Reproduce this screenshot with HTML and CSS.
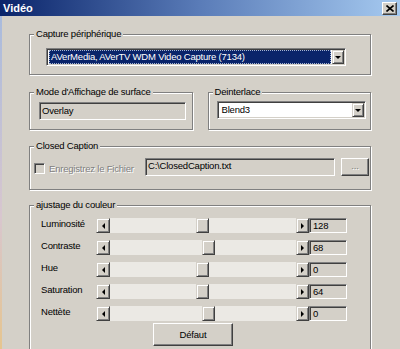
FILE: index.html
```html
<!doctype html>
<html>
	<head>
		<meta charset="utf-8"/>
		<title>Vidéo</title>
		<link rel="stylesheet" href="styles.css">
	</head>
	<body>
		<div class="window">
			<!-- barre de titre -->
			<div class="titlebar">
				<span class="title">Vidéo</span>
				<span class="close">
					<svg width="8" height="7" viewBox="0 0 8 7"><path d="M0.5 0.5 L7.5 6.5 M7.5 0.5 L0.5 6.5" stroke="#000" stroke-width="1.6"/></svg>
				</span>
			</div>
			<div class="content">
				<!-- capture -->
				<fieldset class="group">
					<legend>Capture périphérique</legend>
					<div class="group-body g-capture">
						<div class="combo wide">
							<div class="combo-text selected">AVerMedia, AVerTV WDM Video Capture (7134)</div>
							<div class="combo-btn"><i class="arrow-down"></i></div>
						</div>
					</div>
				</fieldset>

				<div class="pair">
					<fieldset class="group">
						<legend>Mode d'Affichage de surface</legend>
						<div class="group-body g-mode">
							<div class="field overlay">Overlay</div>
						</div>
					</fieldset>
					<fieldset class="group">
						<legend>Deinterlace</legend>
						<div class="group-body g-deint">
							<div class="combo deint">
								<div class="combo-text">Blend3</div>
								<div class="combo-btn"><i class="arrow-down"></i></div>
							</div>
						</div>
					</fieldset>
				</div>

				<fieldset class="group g-caption-box">
					<legend>Closed Caption</legend>
					<div class="group-body g-caption">
						<span class="check"></span>
						<span class="disabled check-label">Enregistrez le Fichier</span>
						<div class="field path">C:\ClosedCaption.txt</div>
						<div class="btn browse disabled">...</div>
					</div>
				</fieldset>

				<fieldset class="group g-color-box">
					<legend>ajustage du couleur</legend>
					<div class="group-body g-color">
						<div class="slider-row">
							<span class="slider-label">Luminosité</span>
							<div class="scroll">
								<div class="sb-btn"><i class="arrow-left"></i></div>
								<div class="track"><div class="thumb" style="margin-left:86px"></div></div>
								<div class="sb-btn"><i class="arrow-right"></i></div>
							</div>
							<div class="value">128</div>
						</div>
						<div class="slider-row">
							<span class="slider-label">Contraste</span>
							<div class="scroll">
								<div class="sb-btn"><i class="arrow-left"></i></div>
								<div class="track"><div class="thumb" style="margin-left:92px"></div></div>
								<div class="sb-btn"><i class="arrow-right"></i></div>
							</div>
							<div class="value">68</div>
						</div>
						<div class="slider-row">
							<span class="slider-label">Hue</span>
							<div class="scroll">
								<div class="sb-btn"><i class="arrow-left"></i></div>
								<div class="track"><div class="thumb" style="margin-left:86px"></div></div>
								<div class="sb-btn"><i class="arrow-right"></i></div>
							</div>
							<div class="value">0</div>
						</div>
						<div class="slider-row">
							<span class="slider-label">Saturation</span>
							<div class="scroll">
								<div class="sb-btn"><i class="arrow-left"></i></div>
								<div class="track"><div class="thumb" style="margin-left:86px"></div></div>
								<div class="sb-btn"><i class="arrow-right"></i></div>
							</div>
							<div class="value">64</div>
						</div>
						<div class="slider-row">
							<span class="slider-label">Nettète</span>
							<div class="scroll">
								<div class="sb-btn"><i class="arrow-left"></i></div>
								<div class="track"><div class="thumb" style="margin-left:92px"></div></div>
								<div class="sb-btn"><i class="arrow-right"></i></div>
							</div>
							<div class="value">0</div>
						</div>
						<div class="btn-row">
							<div class="btn defaut">Défaut</div>
						</div>
					</div>
				</fieldset>
			</div>
		</div>
	</body>
</html>
```

FILE: styles.css
```css
html, body{
	margin:0;
	padding:0;
	background:#d4d0c8;
}
body{
	font-family:"Liberation Sans", Arial, sans-serif;
	font-size:9.5px;
	letter-spacing:-0.2px;
	color:#000;
}
.window{
	width:400px;
	height:349px;
	overflow:hidden;
	display:flex;
	flex-direction:column;
	background:#d4d0c8;
}
/* barre de titre */
.titlebar{
	height:16px;
	flex:none;
	display:flex;
	align-items:center;
	justify-content:space-between;
	padding:0 3px 0 3px;
	background:linear-gradient(to right, #0a246a, #5a7cb8 50%, #a6caf0);
}
.title{
	color:#fff;
	font-weight:bold;
	font-size:11px;
	letter-spacing:0;
}
.close{
	width:13px;
	height:11px;
	display:flex;
	align-items:center;
	justify-content:center;
	background:#d4d0c8;
	border:1px solid;
	border-color:#fff #404040 #404040 #fff;
	box-shadow:inset -1px -1px 0 #808080;
}
.content{
	flex:1;
	padding:12px 29px 0 29px;
	background:linear-gradient(to bottom, #a9bbdd, #d8c6cf 60%, #e6c58e) left top / 2px 100% no-repeat, #d4d0c8;
}
/* cadres */
.group{
	margin:0;
	padding:0;
	min-width:0;
	border:1px solid #808080;
	box-shadow:1px 1px 0 #fff, inset 1px 1px 0 #fff;
}
.group legend{
	margin-left:4px;
	padding:0 2px;
	line-height:12px;
	background:#d4d0c8;
}
.g-capture{
	padding:8px 0 8px 16px;
}
.pair{
	display:flex;
	gap:15px;
	margin-top:11px;
}
.pair .group{
	flex:1;
}
.g-mode{
	padding:4px 0 9px 9px;
}
.g-deint{
	padding:3px 0 10px 8px;
}
.g-caption-box{
	margin-top:10px;
}
.g-caption{
	display:flex;
	align-items:center;
	height:18px;
	padding:6px 0 13px 4px;
}
.g-color-box{
	margin-top:9px;
}
.g-color{
	padding:7px 0 3px 11px;
}
/* champs */
.field{
	height:14px;
	line-height:14px;
	padding:0 2px;
	background:#d4d0c8;
	border:1px solid;
	border-color:#808080 #fff #fff #808080;
	box-shadow:inset 1px 1px 0 #404040, inset -1px -1px 0 #d4d0c8;
}
.overlay{
	width:141px;
	height:16px;
	line-height:16px;
}
.combo{
	display:flex;
	height:14px;
	padding:1px;
	background:#fff;
	border:1px solid;
	border-color:#808080 #fff #fff #808080;
	box-shadow:inset 1px 1px 0 #404040, inset -1px -1px 0 #d4d0c8;
}
.combo.wide{
	width:296px;
}
.combo.deint{
	width:145px;
}
.combo-text{
	flex:1;
	line-height:14px;
	padding:0 2px;
	margin-left:1px;
}
.combo-text.selected{
	background:#0a246a;
	color:#fff;
	outline:1px dotted #a6b4d0;
	outline-offset:-1px;
}
.combo-btn{
	width:12px;
	margin-left:1px;
	display:flex;
	align-items:center;
	justify-content:center;
	background:#d4d0c8;
	border:1px solid;
	border-color:#d4d0c8 #404040 #404040 #d4d0c8;
	box-shadow:inset 1px 1px 0 #fff, inset -1px -1px 0 #808080;
	box-sizing:border-box;
	height:14px;
}
.arrow-down{
	width:0;
	height:0;
	border-left:3px solid transparent;
	border-right:3px solid transparent;
	border-top:3px solid #000;
	margin-top:1px;
}
/* closed caption */
.check{
	width:9px;
	height:9px;
	margin-top:2px;
	background:#d4d0c8;
	border:1px solid;
	border-color:#808080 #fff #fff #808080;
	box-shadow:inset 1px 1px 0 #404040;
}
.disabled{
	color:#808080;
	text-shadow:1px 1px 0 #fff;
}
.check-label{
	margin-left:4px;
	width:90px;
	margin-top:2px;
}
.path{
	width:184px;
	height:16px;
	line-height:14px;
	margin-left:6px;
}
.btn{
	background:#d4d0c8;
	border:1px solid;
	border-color:#fff #404040 #404040 #fff;
	box-shadow:inset -1px -1px 0 #808080;
	text-align:center;
	box-sizing:border-box;
}
.browse{
	width:28px;
	height:18px;
	line-height:14px;
	margin-left:6px;
}
/* curseurs */
.slider-row{
	display:flex;
	height:15px;
	margin-bottom:7px;
}
.slider-label{
	width:55px;
	line-height:11px;
}
.scroll{
	display:flex;
	width:213px;
}
.sb-btn{
	width:14px;
	height:15px;
	box-sizing:border-box;
	display:flex;
	align-items:center;
	justify-content:center;
	background:#d4d0c8;
	border:1px solid;
	border-color:#d4d0c8 #404040 #404040 #d4d0c8;
	box-shadow:inset 1px 1px 0 #fff, inset -1px -1px 0 #808080;
}
.sb-btn:last-child{
	width:13px;
}
.arrow-left{
	border-top:3px solid transparent;
	border-bottom:3px solid transparent;
	border-right:3px solid #000;
}
.arrow-right{
	border-top:3px solid transparent;
	border-bottom:3px solid transparent;
	border-left:3px solid #000;
}
.track{
	flex:1;
	display:flex;
	background:#ebe9e4;
}
.thumb{
	width:13px;
	height:15px;
	box-sizing:border-box;
	background:#d4d0c8;
	border:1px solid;
	border-color:#d4d0c8 #404040 #404040 #d4d0c8;
	box-shadow:inset 1px 1px 0 #fff, inset -1px -1px 0 #808080;
}
.value{
	width:38px;
	height:15px;
	box-sizing:border-box;
	line-height:13px;
	padding-left:3px;
	background:#d4d0c8;
	border:1px solid;
	border-color:#808080 #fff #fff #808080;
	box-shadow:inset 1px 0 0 #404040, inset 0 1px 0 #404040;
}
.btn-row{
	margin-top:-5px;
	padding-left:112px;
}
.defaut{
	width:80px;
	height:23px;
	line-height:21px;
}
```
